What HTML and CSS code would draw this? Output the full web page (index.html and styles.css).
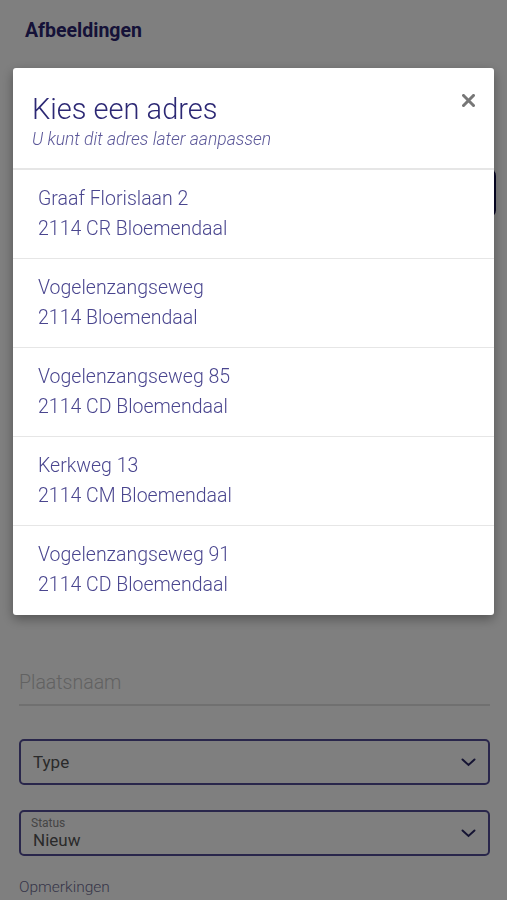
FILE: index.html
```html
<!DOCTYPE html>
<html lang="nl">
<head>
  <meta charset="UTF-8">
  <meta name="viewport" content="width=device-width, initial-scale=1.0">
  <title>Object bewerken</title>
  <link rel="stylesheet" href="styles.css">
</head>
<body>
  <main class="form">
    <h2 class="section-title">Afbeeldingen</h2>
    <div class="photos"></div>
    <button class="button"></button>

    <!-- adresvelden (achter de dialoog) -->
    <div class="address-fields"></div>

    <div class="field"><span class="placeholder">Plaatsnaam</span></div>

    <div class="select select-type">
      <span class="select-value">Type</span>
      <svg class="chevron" width="15" height="9" viewBox="0 0 15 9"><path d="M1.5 1.5 L7.5 7 L13.5 1.5" fill="none" stroke="#2b2866" stroke-width="2" stroke-linecap="round"/></svg>
    </div>

    <div class="select select-status">
      <div>
        <span class="select-label">Status</span>
        <span class="select-value">Nieuw</span>
      </div>
      <svg class="chevron" width="15" height="9" viewBox="0 0 15 9"><path d="M1.5 1.5 L7.5 7 L13.5 1.5" fill="none" stroke="#2b2866" stroke-width="2" stroke-linecap="round"/></svg>
    </div>

    <label class="remarks">Opmerkingen</label>
  </main>

  <div class="overlay"></div>

  <div class="modal">
    <div class="modal-header">
      <h1 class="modal-title">Kies een adres</h1>
      <p class="modal-subtitle">U kunt dit adres later aanpassen</p>
      <button class="close-btn" aria-label="Sluiten">
        <svg width="13" height="13" viewBox="0 0 13 13"><path d="M1.5 1.5 L11.5 11.5 M11.5 1.5 L1.5 11.5" stroke="#777" stroke-width="3" stroke-linecap="square"/></svg>
      </button>
    </div>
    <ul class="address-list">
      <li class="address"><span>Graaf Florislaan 2</span><span>2114 CR Bloemendaal</span></li>
      <li class="address"><span>Vogelenzangseweg</span><span>2114 Bloemendaal</span></li>
      <li class="address"><span>Vogelenzangseweg 85</span><span>2114 CD Bloemendaal</span></li>
      <li class="address"><span>Kerkweg 13</span><span>2114 CM Bloemendaal</span></li>
      <li class="address"><span>Vogelenzangseweg 91</span><span>2114 CD Bloemendaal</span></li>
    </ul>
  </div>
</body>
</html>
```

FILE: styles.css
```css
body {
  margin: 0;
  font-family: Roboto, "Noto Sans", Arial, sans-serif;
  background-color: #fff;
  overflow: hidden;
}
.form {
  display: flex;
  flex-direction: column;
  padding: 20px 18px 0 19px;
}
.section-title {
  margin: 0 0 0 6px;
  font-size: 19.5px;
  line-height: 22px;
  font-weight: bold;
  color: #2a2470;
}
.photos {
  height: 80px;
  margin-top: 30px;
}
.button {
  height: 50px;
  margin-top: 16px;
  margin-right: -7px;
  border: none;
  border-radius: 8px;
  background-color: #0d0a4a;
}
.address-fields {
  height: 442px;
}
.field {
  height: 46px;
  box-sizing: border-box;
  padding: 12px 0;
  border-bottom: 2px solid #e0e0e0;
  margin-right: -1px;
}
.placeholder {
  display: block;
  font-size: 19.5px;
  line-height: 22px;
  font-weight: 300;
  color: #c4c4c4;
}
.select {
  display: flex;
  align-items: center;
  justify-content: space-between;
  height: 46px;
  box-sizing: border-box;
  padding: 0 12px;
  border: 2px solid #524d96;
  border-radius: 5px;
  margin-right: -1px;
}
.select-type {
  margin-top: 33px;
}
.select-status {
  margin-top: 25px;
}
.select-label {
  display: block;
  font-size: 12px;
  line-height: 13px;
  color: #8a8a8a;
  margin-left: -2px;
}
.select-value {
  display: block;
  font-size: 17px;
  line-height: 20px;
  color: #555;
}
.chevron {
  display: block;
}
.remarks {
  margin-top: 22px;
  font-size: 15.5px;
  line-height: 18px;
  font-weight: 300;
  color: #6e6c92;
}
.overlay {
  position: fixed;
  inset: 0;
  background-color: rgba(0, 0, 0, 0.5);
}
.modal {
  position: fixed;
  top: 68px;
  left: 13px;
  width: 481px;
  background-color: white;
  border-radius: 3px;
  box-shadow: 0 4px 12px rgba(0, 0, 0, 0.35);
}
.modal-header {
  position: relative;
  padding: 25px 19px 19px 19px;
  border-bottom: 2px solid #e6e6e6;
}
.modal-title {
  margin: 0;
  font-size: 29px;
  line-height: 32px;
  font-weight: 300;
  color: #2c2874;
}
.modal-subtitle {
  margin: 4px 0 0;
  font-size: 17.5px;
  line-height: 20px;
  font-style: italic;
  font-weight: 300;
  color: #5c5899;
}
.close-btn {
  position: absolute;
  top: 26px;
  right: 19px;
  padding: 0;
  border: none;
  background: none;
  cursor: pointer;
}
.close-btn svg {
  display: block;
}
.address-list {
  margin: 0;
  padding: 0;
  list-style: none;
}
.address {
  display: flex;
  flex-direction: column;
  padding: 14px 25px;
  border-bottom: 1px solid #e6e6e6;
  font-size: 19.5px;
  line-height: 30px;
  font-weight: 300;
  color: #4a468f;
  cursor: pointer;
}
.address:last-child {
  border-bottom: none;
  padding-bottom: 15px;
}
```
